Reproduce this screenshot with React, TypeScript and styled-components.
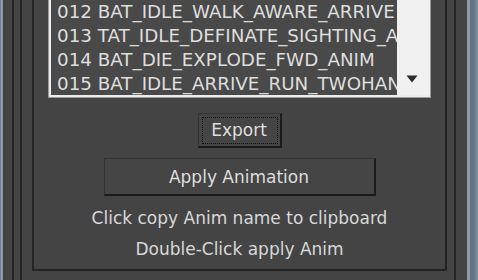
import React from 'react';
import styled, { createGlobalStyle } from 'styled-components';

const Global = createGlobalStyle`
  html, body { margin: 0; padding: 0; background: #444444; overflow: hidden; }
  body { font-family: "DejaVu Sans", Verdana, sans-serif; }
`;

const Frame = styled.div`
  display: flex;
  width: 478px;
  height: 280px;
  background: #444444;
  overflow: hidden;
`;

const EdgeLeft = styled.div`
  flex: none;
  width: 3px;
  background: linear-gradient(to right, #56677a, #a4b3c3 55%, #6f7f90);
`;

const EdgeRight = styled.div`
  flex: none;
  width: 11px;
  margin-left: 11px;
  background: linear-gradient(to right, #8d99a6 0 3px, #5e6d7c 3px, #6a7989 70%, #8593a1);
`;

const Rule = styled.div<{ $ml: number }>`
  flex: none;
  width: 2px;
  margin-left: ${(p) => p.$ml}px;
  background: #242424;
`;

const GroupBox = styled.div`
  flex: none;
  box-sizing: border-box;
  width: 415px;
  height: 271px;
  margin-left: 10px;
  border: 2px solid #242424;
  border-top: none;
  padding: 0 14px 4px;
  display: flex;
  flex-direction: column;
  align-items: center;
`;

const ListOuter = styled.div`
  align-self: stretch;
  box-sizing: border-box;
  height: 98px;
  border: 1px solid #9a9a9a;
  border-top: none;
  display: flex;
`;

const ListInner = styled.div`
  flex: 1;
  display: flex;
  border-left: 2px solid #ececec;
  border-bottom: 2px solid #ececec;
  overflow: hidden;
`;

const Items = styled.div`
  flex: 1;
  background: #494949;
  overflow: hidden;
  padding-left: 6px;
`;

const Item = styled.div`
  height: 24px;
  line-height: 24px;
  font-size: 18.3px;
  color: #dedede;
  white-space: nowrap;
`;

const ScrollBar = styled.div`
  flex: none;
  width: 33px;
  background: #f0f0f0;
  display: flex;
  flex-direction: column;
  justify-content: flex-end;
  align-items: flex-start;
  padding: 0 0 12px 9px;
  box-sizing: border-box;
`;

const Button = styled.button<{ $w: number; $h: number; $mt: number; $focus?: boolean }>`
  flex: none;
  box-sizing: border-box;
  width: ${(p) => p.$w}px;
  height: ${(p) => p.$h}px;
  margin-top: ${(p) => p.$mt}px;
  padding: 0;
  background: #454545;
  color: #dedede;
  font-family: "DejaVu Sans", Verdana, sans-serif;
  font-size: 17px;
  border-style: solid;
  border-width: 1px 2px 2px 1px;
  border-color: #333333 #1c1c1c #1a1a1a #333333;
  outline: ${(p) => (p.$focus ? '1px dotted #0d0d0d' : 'none')};
  outline-offset: -5px;
`;

const Hint = styled.div<{ $mt: number }>`
  margin-top: ${(p) => p.$mt}px;
  line-height: 31px;
  font-size: 17px;
  color: #d8d8d8;
  white-space: nowrap;
`;

const items = [
  '012 BAT_IDLE_WALK_AWARE_ARRIVE',
  '013 TAT_IDLE_DEFINATE_SIGHTING_A',
  '014 BAT_DIE_EXPLODE_FWD_ANIM',
  '015 BAT_IDLE_ARRIVE_RUN_TWOHANDED',
];

export default function App() {
  return (
    <>
      <Global />
      <Frame>
        <EdgeLeft />
        <Rule $ml={9} />
        <Rule $ml={6} />
        <GroupBox>
          <ListOuter>
            <ListInner>
              <Items>
                {items.map((t) => (
                  <Item key={t}>{t}</Item>
                ))}
              </Items>
              <ScrollBar>
                <svg width="12" height="8" viewBox="0 0 12 8">
                  <path d="M0.5 0.5 H11.5 L6 7.5 Z" fill="#2b2b2b" />
                </svg>
              </ScrollBar>
            </ListInner>
          </ListOuter>
          <Button $w={84} $h={35} $mt={15} $focus>
            Export
          </Button>
          <Button $w={272} $h={38} $mt={10}>
            Apply Animation
          </Button>
          <Hint $mt={7}>Click copy Anim name to clipboard</Hint>
          <Hint $mt={0}>Double-Click apply Anim</Hint>
        </GroupBox>
        <Rule $ml={7} />
        <EdgeRight />
      </Frame>
    </>
  );
}
